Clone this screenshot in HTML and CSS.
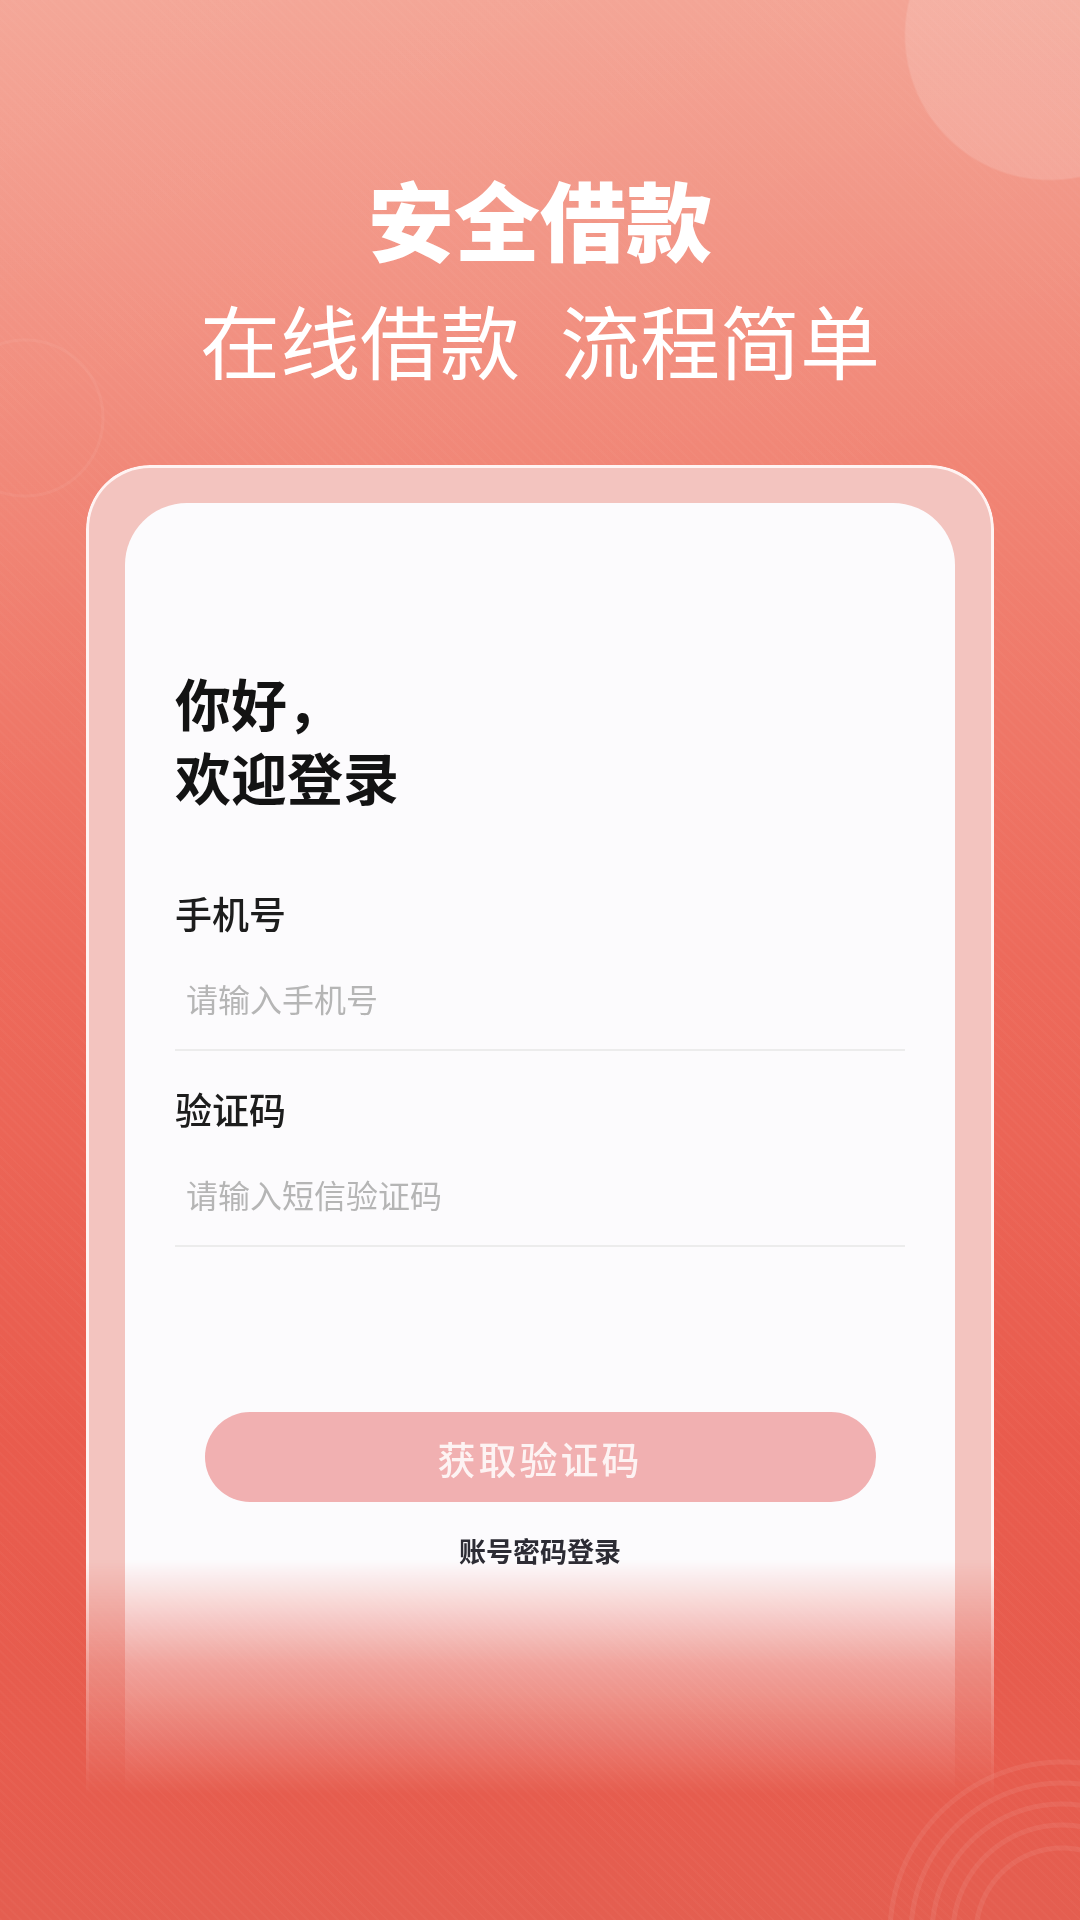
FILE: index.html
```html
<!DOCTYPE html>
<html lang="zh-CN">
  <head>
    <meta charset="UTF-8" />
    <meta name="viewport" content="width=device-width, initial-scale=1.0" />
    <title>安全借款 - 登录</title>
    <link rel="stylesheet" href="styles.css">
  </head>
  <body>
    <header class="hero">
      <h1 class="hero-title">安全借款</h1>
      <p class="hero-sub">在线借款 流程简单</p>
    </header>

    <main class="frame">
      <div class="card">
        <h2 class="greeting">你好，<br />欢迎登录</h2>

        <div class="field">
          <label class="field-label" for="phone">手机号</label>
          <input class="field-input" id="phone" type="text" placeholder="请输入手机号" />
        </div>

        <div class="field">
          <label class="field-label" for="code">验证码</label>
          <input class="field-input" id="code" type="text" placeholder="请输入短信验证码" />
        </div>

        <button class="btn-code" type="button">获取验证码</button>
        <a class="link-pwd" href="#">账号密码登录</a>
      </div>
    </main>
  </body>
</html>
```

FILE: styles.css
```css
html,
body {
  margin: 0;
  padding: 0;
}

body {
  width: 1080px;
  height: 1920px;
  overflow: hidden;
  font-family: "Noto Sans CJK SC", "Noto Sans", sans-serif;
  color: #151515;
  background-color: #e45e50;
  background-image:
    /* big soft circle top right */
    radial-gradient(circle at 1050px 35px, rgba(255, 255, 255, 0.14) 144px, rgba(255, 255, 255, 0) 146px),
    /* faint ring on the left */
    radial-gradient(circle at 25px 418px, rgba(255, 255, 255, 0) 76px, rgba(255, 255, 255, 0.05) 77px, rgba(255, 255, 255, 0.05) 79px, rgba(255, 255, 255, 0) 80px),
    /* rings bottom right */
    radial-gradient(circle at 1062px 1934px,
      rgba(255, 255, 255, 0) 83px, rgba(255, 255, 255, 0.07) 84px, rgba(255, 255, 255, 0.07) 88px, rgba(255, 255, 255, 0) 89px,
      rgba(255, 255, 255, 0) 106px, rgba(255, 255, 255, 0.07) 107px, rgba(255, 255, 255, 0.07) 111px, rgba(255, 255, 255, 0) 112px,
      rgba(255, 255, 255, 0) 127px, rgba(255, 255, 255, 0.07) 128px, rgba(255, 255, 255, 0.07) 132px, rgba(255, 255, 255, 0) 133px,
      rgba(255, 255, 255, 0) 148px, rgba(255, 255, 255, 0.07) 149px, rgba(255, 255, 255, 0.07) 153px, rgba(255, 255, 255, 0) 154px,
      rgba(255, 255, 255, 0) 169px, rgba(255, 255, 255, 0.07) 170px, rgba(255, 255, 255, 0.07) 174px, rgba(255, 255, 255, 0) 175px),
    /* fine diagonal texture */
    repeating-linear-gradient(45deg, rgba(255, 255, 255, 0.025) 0 2px, rgba(255, 255, 255, 0) 2px 7px),
    linear-gradient(160deg, rgba(255, 255, 255, 0.08) 0, rgba(255, 255, 255, 0) 35%),
    linear-gradient(to bottom, #f3a090 0, #f18474 480px, #ed6a5b 960px, #e95b4d 1440px, #e65c4e 1790px, #e45e50 1920px);
}

/* ---------- header ---------- */

.hero {
  padding-top: 175px;
  text-align: center;
  color: #fff;
}

.hero-title {
  margin: 0;
  font-size: 86px;
  line-height: 86px;
  font-weight: 900;
}

.hero-sub {
  margin: 37px 0 0;
  font-size: 80px;
  line-height: 80px;
  font-weight: 400;
  word-spacing: 22px;
}

/* ---------- login card ---------- */

.frame {
  width: 830px;
  margin: 87px auto 0;
  padding: 35px 36px 36px;
  background-color: #f3c4bf;
  border: 3px solid rgba(255, 246, 244, 0.95);
  border-radius: 64px;
  -webkit-mask-image: linear-gradient(to bottom, #000 1095px, rgba(0, 0, 0, 0.45) 1200px, rgba(0, 0, 0, 0) 1330px);
  mask-image: linear-gradient(to bottom, #000 1095px, rgba(0, 0, 0, 0.45) 1200px, rgba(0, 0, 0, 0) 1330px);
}

.card {
  background-color: #fcfbfd;
  border-radius: 62px;
  padding: 162px 50px 320px;
}

.greeting {
  margin: 0;
  font-size: 56px;
  line-height: 74px;
  font-weight: 700;
  color: #131313;
}

.field {
  margin-top: 36px;
}

.greeting + .field {
  margin-top: 78px;
}

.field-label {
  display: block;
  font-size: 37px;
  line-height: 44px;
  font-weight: 500;
  color: #1d1d1d;
}

.field-input {
  display: block;
  width: 100%;
  box-sizing: border-box;
  height: 116px;
  margin: 0;
  padding: 44px 11px 32px;
  border: none;
  border-bottom: 2px solid #ececec;
  background: transparent;
  font-family: inherit;
  font-size: 32px;
  line-height: 38px;
  color: #333;
  outline: none;
}

.field-input::placeholder {
  color: #b5b5b5;
}

.btn-code {
  display: block;
  width: 671px;
  height: 90px;
  margin: 165px auto 0;
  padding: 0;
  border: none;
  border-radius: 45px;
  background-color: #f1b0b1;
  color: #fdf3f3;
  font-family: inherit;
  font-size: 38px;
  letter-spacing: 3px;
  font-weight: 500;
  cursor: pointer;
}

.link-pwd {
  display: block;
  margin-top: 33px;
  text-align: center;
  font-size: 27px;
  line-height: 32px;
  font-weight: 700;
  color: #2c2c34;
  text-decoration: none;
}
```
